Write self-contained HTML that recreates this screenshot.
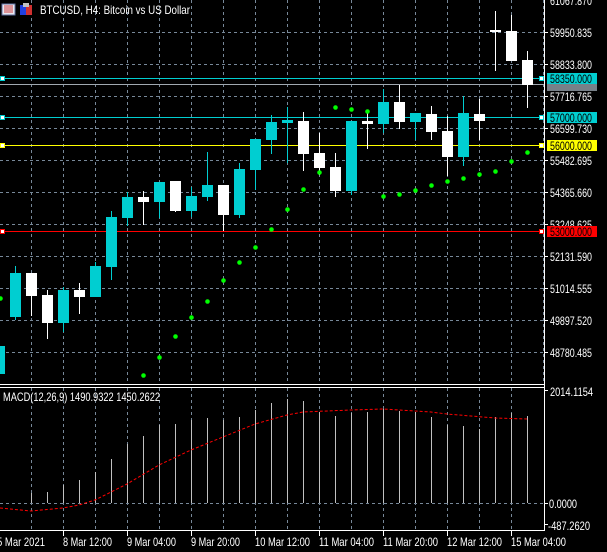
<!DOCTYPE html><html><head><style>
html,body{margin:0;padding:0;background:#000;}
svg{display:block;}
text{font-family:"Liberation Sans",sans-serif;font-size:12px;}
</style></head><body>
<svg width="607" height="552" viewBox="0 0 607 552" xmlns="http://www.w3.org/2000/svg" shape-rendering="crispEdges">
<rect width="607" height="552" fill="#000"/>
<g stroke="#778899" stroke-width="1" stroke-dasharray="3,3">
<path d="M0 32.5H544M0 64.5H544M0 96.5H544M0 128.5H544M0 160.5H544M0 192.5H544M0 224.5H544M0 256.5H544M0 288.5H544M0 320.5H544M0 352.5H544"/>
<path d="M31.5 0V384M63.5 0V384M95.5 0V384M127.5 0V384M159.5 0V384M191.5 0V384M223.5 0V384M255.5 0V384M287.5 0V384M319.5 0V384M351.5 0V384M383.5 0V384M415.5 0V384M447.5 0V384M479.5 0V384M511.5 0V384M543.5 0V384"/>
<path d="M31.5 388V530M63.5 388V530M95.5 388V530M127.5 388V530M159.5 388V530M191.5 388V530M223.5 388V530M255.5 388V530M287.5 388V530M319.5 388V530M351.5 388V530M383.5 388V530M415.5 388V530M447.5 388V530M479.5 388V530M511.5 388V530"/>
<path d="M0 503.5H544"/>
</g>
<path d="M0 78.5H544" stroke="#00ced1"/>
<path d="M0 84.5H544" stroke="#a0a8b0"/>
<path d="M0 117.5H544" stroke="#00ced1"/>
<path d="M0 145.5H544" stroke="#ffff00"/>
<path d="M0 231.5H544" stroke="#ff0000"/>
<g stroke-width="1">
<path stroke="#00ced1" d="M15.5 266V320M63.5 287V332M95.5 262V297M111.5 211V280M127.5 192V226M159.5 182V218M191.5 187V217M207.5 152V201M239.5 163V218M255.5 139V190M271.5 115V154M287.5 107V163M351.5 121V195M383.5 89V133M415.5 113V140M463.5 96V166"/>
<path stroke="#fff" d="M31.5 273V316M47.5 290V339M79.5 283V314M143.5 191V225M175.5 181V212M223.5 185V231M303.5 112V171M319.5 133V175M335.5 153V197M367.5 113V149M399.5 85V129M431.5 106V140M447.5 116V176M479.5 99V140M495.5 11V71M511.5 15V61M527.5 51V108"/>
</g>
<g fill="#00ced1">
<rect x="-6" y="346" width="11" height="28"/>
<rect x="10" y="273" width="11" height="44"/>
<rect x="58" y="290" width="11" height="33"/>
<rect x="90" y="266" width="11" height="31"/>
<rect x="106" y="217" width="11" height="50"/>
<rect x="122" y="197" width="11" height="21"/>
<rect x="154" y="182" width="11" height="20"/>
<rect x="186" y="196" width="11" height="15"/>
<rect x="202" y="185" width="11" height="12"/>
<rect x="234" y="169" width="11" height="46"/>
<rect x="250" y="139" width="11" height="31"/>
<rect x="266" y="122" width="11" height="18"/>
<rect x="282" y="120" width="11" height="3"/>
<rect x="346" y="121" width="11" height="70"/>
<rect x="378" y="102" width="11" height="22"/>
<rect x="410" y="113" width="11" height="9"/>
<rect x="458" y="113" width="11" height="44"/>
</g>
<g fill="#fff">
<rect x="26" y="273" width="11" height="23"/>
<rect x="42" y="295" width="11" height="28"/>
<rect x="74" y="290" width="11" height="7"/>
<rect x="138" y="197" width="11" height="5"/>
<rect x="170" y="181" width="11" height="30"/>
<rect x="218" y="185" width="11" height="30"/>
<rect x="298" y="121" width="11" height="33"/>
<rect x="314" y="153" width="11" height="15"/>
<rect x="330" y="167" width="11" height="24"/>
<rect x="362" y="121" width="11" height="3"/>
<rect x="394" y="102" width="11" height="20"/>
<rect x="426" y="114" width="11" height="18"/>
<rect x="442" y="131" width="11" height="26"/>
<rect x="474" y="114" width="11" height="7"/>
<rect x="490" y="30" width="11" height="2"/>
<rect x="506" y="31" width="11" height="30"/>
<rect x="522" y="60" width="11" height="25"/>
</g>
<g fill="#00ff00" shape-rendering="auto">
<circle cx="0.5" cy="298.5" r="2.3"/><circle cx="143.5" cy="375.5" r="2.3"/><circle cx="159.5" cy="357.5" r="2.3"/><circle cx="175.5" cy="336.5" r="2.3"/><circle cx="191.5" cy="317.5" r="2.3"/><circle cx="207.5" cy="301.5" r="2.3"/><circle cx="223.5" cy="280.5" r="2.3"/><circle cx="239.5" cy="262.5" r="2.3"/><circle cx="255.5" cy="247.5" r="2.3"/><circle cx="271.5" cy="229.5" r="2.3"/><circle cx="287.5" cy="209.5" r="2.3"/><circle cx="303.5" cy="189.5" r="2.3"/><circle cx="319.5" cy="172.5" r="2.3"/><circle cx="335.5" cy="107.5" r="2.3"/><circle cx="351.5" cy="109.5" r="2.3"/><circle cx="367.5" cy="111.5" r="2.3"/><circle cx="383.5" cy="196.5" r="2.3"/><circle cx="399.5" cy="194.5" r="2.3"/><circle cx="415.5" cy="190.5" r="2.3"/><circle cx="431.5" cy="185.5" r="2.3"/><circle cx="447.5" cy="181.5" r="2.3"/><circle cx="463.5" cy="178.5" r="2.3"/><circle cx="479.5" cy="174.5" r="2.3"/><circle cx="495.5" cy="171.5" r="2.3"/><circle cx="511.5" cy="161.5" r="2.3"/><circle cx="527.5" cy="152.5" r="2.3"/>
</g>
<g fill="#fff" stroke-width="1">
<rect x="0.5" y="76.5" width="4" height="4" stroke="#00ced1"/>
<rect x="539.5" y="76.5" width="4" height="4" stroke="#00ced1"/>
<rect x="0.5" y="115.5" width="4" height="4" stroke="#00ced1"/>
<rect x="539.5" y="115.5" width="4" height="4" stroke="#00ced1"/>
<rect x="0.5" y="143.5" width="4" height="4" stroke="#ffff00"/>
<rect x="539.5" y="143.5" width="4" height="4" stroke="#ffff00"/>
<rect x="0.5" y="229.5" width="4" height="4" stroke="#ff0000"/>
<rect x="539.5" y="229.5" width="4" height="4" stroke="#ff0000"/>
</g>
<path d="M0 384.5H545M0 387.5H545M544.5 0V531M0 530.5H545" stroke="#fff"/>
<path stroke="#fff" d="M544 32.5H548M544 64.5H548M544 96.5H548M544 128.5H548M544 160.5H548M544 192.5H548M544 224.5H548M544 256.5H548M544 288.5H548M544 320.5H548M544 352.5H548M544 390.5H548M544 503.5H548M544 524.5H548M63.5 531V536M127.5 531V536M191.5 531V536M255.5 531V536M319.5 531V536M383.5 531V536M447.5 531V536M511.5 531V536"/>
<g fill="#fff">
<text x="550" y="5" textLength="42" lengthAdjust="spacingAndGlyphs">61067.870</text>
<text x="550" y="37" textLength="42" lengthAdjust="spacingAndGlyphs">59950.835</text>
<text x="550" y="69" textLength="42" lengthAdjust="spacingAndGlyphs">58833.800</text>
<text x="550" y="101" textLength="42" lengthAdjust="spacingAndGlyphs">57716.765</text>
<text x="550" y="133" textLength="42" lengthAdjust="spacingAndGlyphs">56599.730</text>
<text x="550" y="165" textLength="42" lengthAdjust="spacingAndGlyphs">55482.695</text>
<text x="550" y="197" textLength="42" lengthAdjust="spacingAndGlyphs">54365.660</text>
<text x="550" y="229" textLength="42" lengthAdjust="spacingAndGlyphs">53248.625</text>
<text x="550" y="261" textLength="42" lengthAdjust="spacingAndGlyphs">52131.590</text>
<text x="550" y="293" textLength="42" lengthAdjust="spacingAndGlyphs">51014.555</text>
<text x="550" y="325" textLength="42" lengthAdjust="spacingAndGlyphs">49897.520</text>
<text x="550" y="357" textLength="42" lengthAdjust="spacingAndGlyphs">48780.485</text>
</g>
<rect x="547" y="84" width="50" height="7" fill="#778088"/>
<rect x="547" y="73" width="50" height="11" fill="#00ced1"/>
<text x="550" y="83" fill="#000" textLength="42" lengthAdjust="spacingAndGlyphs">58350.000</text>
<rect x="547" y="112" width="50" height="11" fill="#00ced1"/>
<text x="550" y="122" fill="#000" textLength="42" lengthAdjust="spacingAndGlyphs">57000.000</text>
<rect x="547" y="140" width="50" height="11" fill="#ffff00"/>
<text x="550" y="150" fill="#000" textLength="42" lengthAdjust="spacingAndGlyphs">56000.000</text>
<rect x="547" y="226" width="50" height="11" fill="#ff0000"/>
<text x="550" y="236" fill="#000" textLength="42" lengthAdjust="spacingAndGlyphs">53000.000</text>
<path stroke="#c0c0c0" d="M31.5 493V503M47.5 492V503M63.5 485V503M79.5 480V503M95.5 472V503M111.5 459V503M127.5 444V503M143.5 436V503M159.5 425V503M175.5 424V503M191.5 420V503M207.5 418V503M223.5 420V503M239.5 417V503M255.5 410V503M271.5 403V503M287.5 399V503M303.5 401V503M319.5 412V503M335.5 416V503M351.5 413V503M367.5 412V503M383.5 409V503M399.5 411V503M415.5 412V503M431.5 417V503M447.5 425V503M463.5 426V503M479.5 429V503M495.5 417V503M511.5 413V503M527.5 416V503"/>
<polyline fill="none" stroke="#ff0000" stroke-dasharray="3,2" shape-rendering="auto" points="0,508 31,511 63,508 79,505 95,500 127,484 159,465 191,450 223,437 255,424 287,415 303,412 351,410 383,409 431,412 447,414 495,418 527,419"/>
<g fill="#fff">
<text x="3" y="401" textLength="157" lengthAdjust="spacingAndGlyphs">MACD(12,26,9) 1490.9322 1450.2622</text>
<text x="550" y="396" textLength="43" lengthAdjust="spacingAndGlyphs">2014.1154</text>
<text x="549" y="508" textLength="28" lengthAdjust="spacingAndGlyphs">0.0000</text>
<text x="548" y="530" textLength="42" lengthAdjust="spacingAndGlyphs">-487.2620</text>
<text x="-3" y="546" textLength="48" lengthAdjust="spacingAndGlyphs">5 Mar 2021</text>
<text x="63" y="546" textLength="49" lengthAdjust="spacingAndGlyphs">8 Mar 12:00</text>
<text x="127" y="546" textLength="49" lengthAdjust="spacingAndGlyphs">9 Mar 04:00</text>
<text x="191" y="546" textLength="49" lengthAdjust="spacingAndGlyphs">9 Mar 20:00</text>
<text x="255" y="546" textLength="55" lengthAdjust="spacingAndGlyphs">10 Mar 12:00</text>
<text x="319" y="546" textLength="55" lengthAdjust="spacingAndGlyphs">11 Mar 04:00</text>
<text x="383" y="546" textLength="55" lengthAdjust="spacingAndGlyphs">11 Mar 20:00</text>
<text x="447" y="546" textLength="55" lengthAdjust="spacingAndGlyphs">12 Mar 12:00</text>
<text x="511" y="546" textLength="55" lengthAdjust="spacingAndGlyphs">15 Mar 04:00</text>
</g>
<rect x="2" y="4" width="13" height="11" fill="#e8e8f0" stroke="#6070a0"/>
<path d="M4 6H13M4 8H13M4 10H13M4 12H13" stroke="#d04040"/>
<rect x="20" y="5" width="6" height="10" fill="#2040e0"/>
<rect x="26" y="5" width="6" height="10" fill="#d03030"/>
<rect x="23" y="3" width="6" height="4" fill="#c0c0c0"/>
<text x="40" y="14" fill="#fff" textLength="150" lengthAdjust="spacingAndGlyphs">BTCUSD, H4:  Bitcoin vs US Dollar</text>
</svg>
</body></html>
